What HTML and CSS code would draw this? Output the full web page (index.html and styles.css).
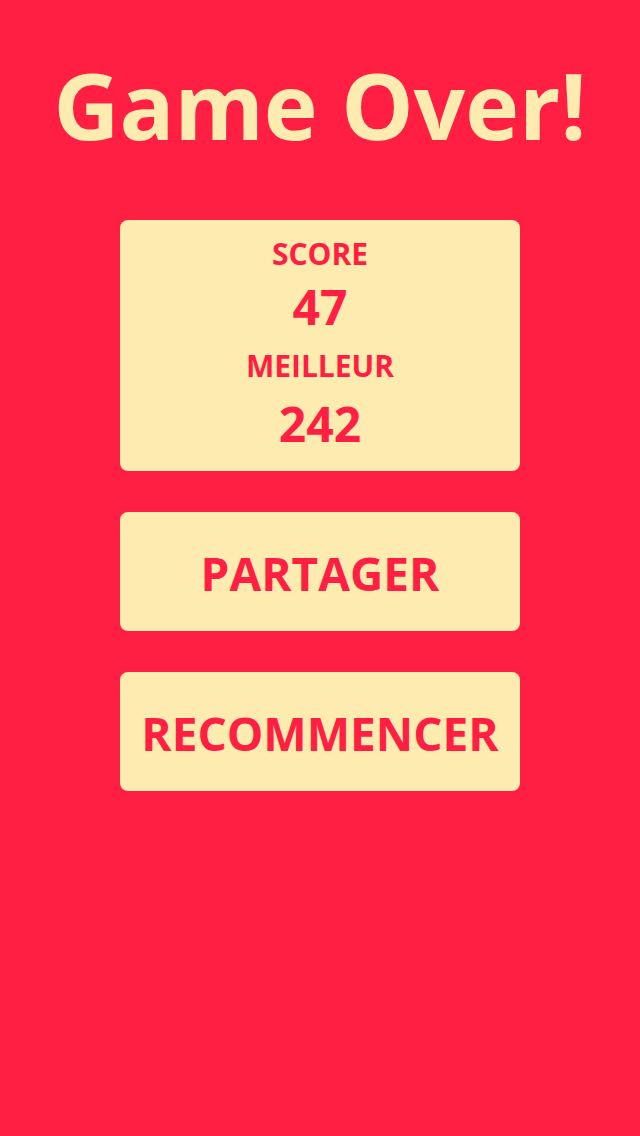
FILE: index.html
```html
<!DOCTYPE html>
<html lang="fr">
<head>
    <meta charset="UTF-8">
    <title>Game Over</title>
    <link rel="stylesheet" href="styles.css">
</head>
<body>
    <div class="screen">
        <h1 class="title">Game Over!</h1>

        <div class="score-box">
            <div class="label">SCORE</div>
            <div class="value current">47</div>
            <div class="label">MEILLEUR</div>
            <div class="value best">242</div>
        </div>

        <button class="action">PARTAGER</button>
        <button class="action">RECOMMENCER</button>
    </div>
</body>
</html>
```
FILE: styles.css
```css
body {
    margin: 0;
    background: #ff1f43;
    font-family: 'Open Sans', 'Noto Sans', sans-serif;
}

.screen {
    height: 1136px;
    display: flex;
    flex-direction: column;
    align-items: center;
}

.title {
    margin: 45px 0 0;
    color: #feebb0;
    font-size: 91px;
    font-weight: 700;
    line-height: 120px;
}

.score-box {
    margin-top: 55px;
    width: 400px;
    height: 251px;
    box-sizing: border-box;
    padding-top: 14px;
    background: #feebb0;
    border-radius: 8px;
    text-align: center;
    color: #ff1f43;
    font-weight: 700;
}

.label {
    font-size: 30px;
    line-height: 40px;
}

.value {
    font-size: 48px;
    line-height: 66px;
}

.value.current {
    margin-bottom: 6px;
}

.value.best {
    line-height: 76px;
}

.action {
    margin-top: 41px;
    width: 400px;
    height: 119px;
    padding-top: 4px;
    border: none;
    border-radius: 8px;
    background: #feebb0;
    color: #ff1f43;
    font-family: inherit;
    font-size: 46px;
    font-weight: 700;
    cursor: pointer;
}
```
